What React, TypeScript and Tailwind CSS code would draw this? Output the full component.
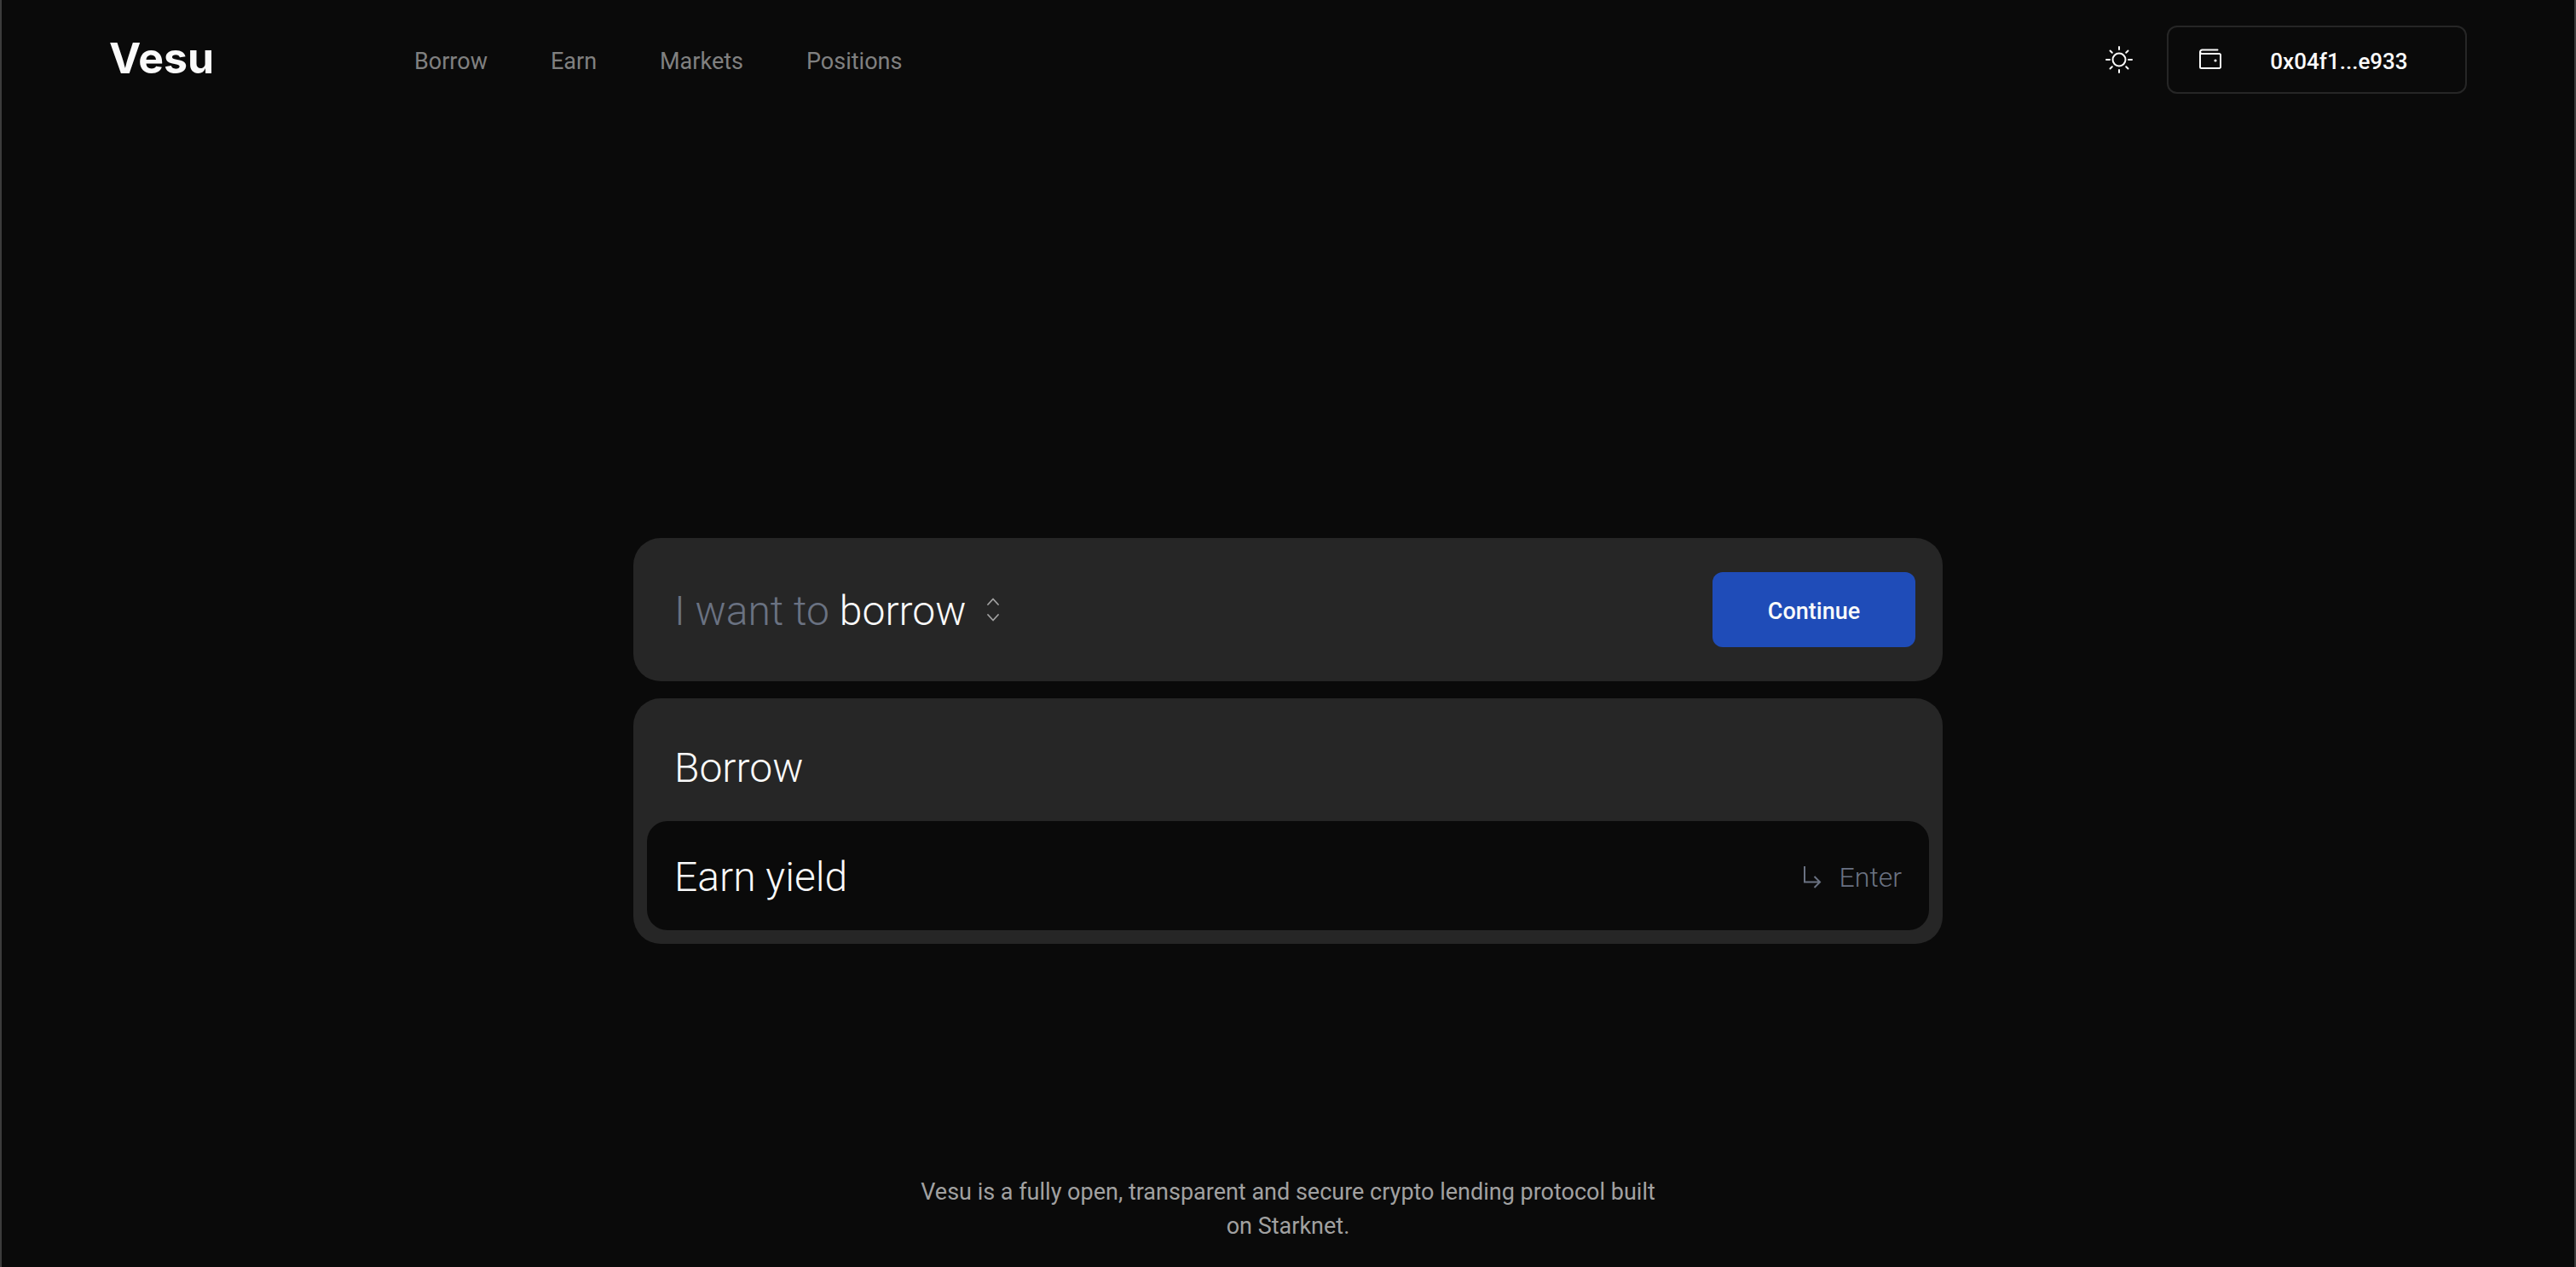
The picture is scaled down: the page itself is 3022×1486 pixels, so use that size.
import { useState } from "react";

const navItems = ["Borrow", "Earn", "Markets", "Positions"];

function Logo() {
  return (
    <a href="#" aria-label="Vesu" className="flex h-12 w-[358px] items-center pb-1 font-['Inter'] text-[50px] font-bold text-neutral-50">
      Vesu
    </a>
  );
}

function SunIcon() {
  return (
    <svg viewBox="0 0 32 32" className="size-8" fill="none" stroke="currentColor" strokeWidth="2" strokeLinecap="round" aria-hidden="true">
      <circle cx="16" cy="16" r="7.5" />
      <path d="M16 1v3M16 28v3M1 16h4M27 16h4M5.500 5.500l2.300 2.300M24.200 24.200l2.300 2.300M5.500 26.500l2.300-2.300M24.200 7.800l2.300-2.300" />
    </svg>
  );
}

function WalletIcon() {
  return (
    <svg viewBox="0 0 28 28" className="size-7" fill="none" stroke="currentColor" strokeWidth="2" strokeLinecap="round" strokeLinejoin="round" aria-hidden="true">
      <path d="M21.500 2.500H3.500a2.500 2.500 0 0 0-2.500 2.500V22.500a1.500 1.500 0 0 0 1.500 1.500h21a1.500 1.500 0 0 0 1.500-1.500V8.500a1.500 1.500 0 0 0-1.500-1.500H3.500a2.500 2.500 0 0 1-2.500-2" />
      <circle cx="19" cy="15" r="1.600" fill="currentColor" stroke="none" />
    </svg>
  );
}

function SortIcon() {
  return (
    <svg viewBox="0 0 16 28" className="h-7 w-4" fill="none" stroke="currentColor" strokeWidth="1.800" strokeLinecap="round" strokeLinejoin="round" aria-hidden="true">
      <path d="M2 8l6-6.500L14 8M2 20l6 6.500L14 20" />
    </svg>
  );
}

function EnterIcon() {
  return (
    <svg viewBox="0 0 24 28" className="h-7 w-6" fill="none" stroke="currentColor" strokeWidth="2" aria-hidden="true">
      <path d="M3 1v18.500h18M14.500 13l6.500 6.500-6.500 6.500" />
    </svg>
  );
}

export default function App() {
  const [action, setAction] = useState("borrow");
  return (
    <div className="flex min-h-screen flex-col border-x-2 border-[#3c3c3c] bg-neutral-950 font-['Roboto',sans-serif] text-neutral-50">
      <header className="flex items-center px-[126px] pt-[30px]">
        <Logo />
        <nav className="flex flex-1 gap-[74px] pt-1 text-[27px] leading-10 text-[#808080]">
          {navItems.map((item) => (
            <a key={item} href="#">
              {item}
            </a>
          ))}
        </nav>
        <button type="button" aria-label="Toggle theme" className="mr-10">
          <SunIcon />
        </button>
        <button type="button" className="flex h-20 w-[352px] items-center rounded-xl border-2 border-neutral-800 px-9 text-[26px] font-medium">
          <WalletIcon />
          <span className="flex-1 pl-6 pt-1">0x04f1...e933</span>
        </button>
      </header>

      <main className="flex flex-1 flex-col items-center justify-center gap-5 pt-[250px]">
        <section className="flex h-[168px] w-full max-w-[1536px] items-center rounded-[32px] bg-neutral-800 pl-12 pr-8 text-5xl font-light">
          <span className="pt-1 text-gray-500">I want to</span>
          <button type="button" className="ml-3 flex items-center gap-6" onClick={() => setAction("borrow")}>
            <span className="pt-1">{action}</span>
            <span className="text-neutral-400">
              <SortIcon />
            </span>
          </button>
          <button type="button" className="ml-auto h-22 w-[238px] rounded-xl bg-[#1f4cb8] pt-1 text-[27px] font-medium">
            Continue
          </button>
        </section>
        <section className="flex w-full max-w-[1536px] flex-col rounded-[32px] bg-neutral-800 p-4 text-5xl font-light">
          <button type="button" className="flex h-32 items-center rounded-3xl px-8 pt-1 text-left" onClick={() => setAction("borrow")}>
            Borrow
          </button>
          <button type="button" className="flex h-32 items-center justify-between rounded-3xl bg-neutral-950 px-8 pt-1 text-left" onClick={() => setAction("earn yield")}>
            Earn yield
            <span className="flex items-center gap-5 text-[32px] text-gray-500">
              <EnterIcon />
              Enter
            </span>
          </button>
        </section>
      </main>

      <footer className="flex justify-center pb-7">
        <p className="max-w-[896px] text-center text-[27px] leading-10 text-neutral-400">
          Vesu is a fully open, transparent and secure crypto lending protocol built on Starknet.
        </p>
      </footer>
    </div>
  );
}
